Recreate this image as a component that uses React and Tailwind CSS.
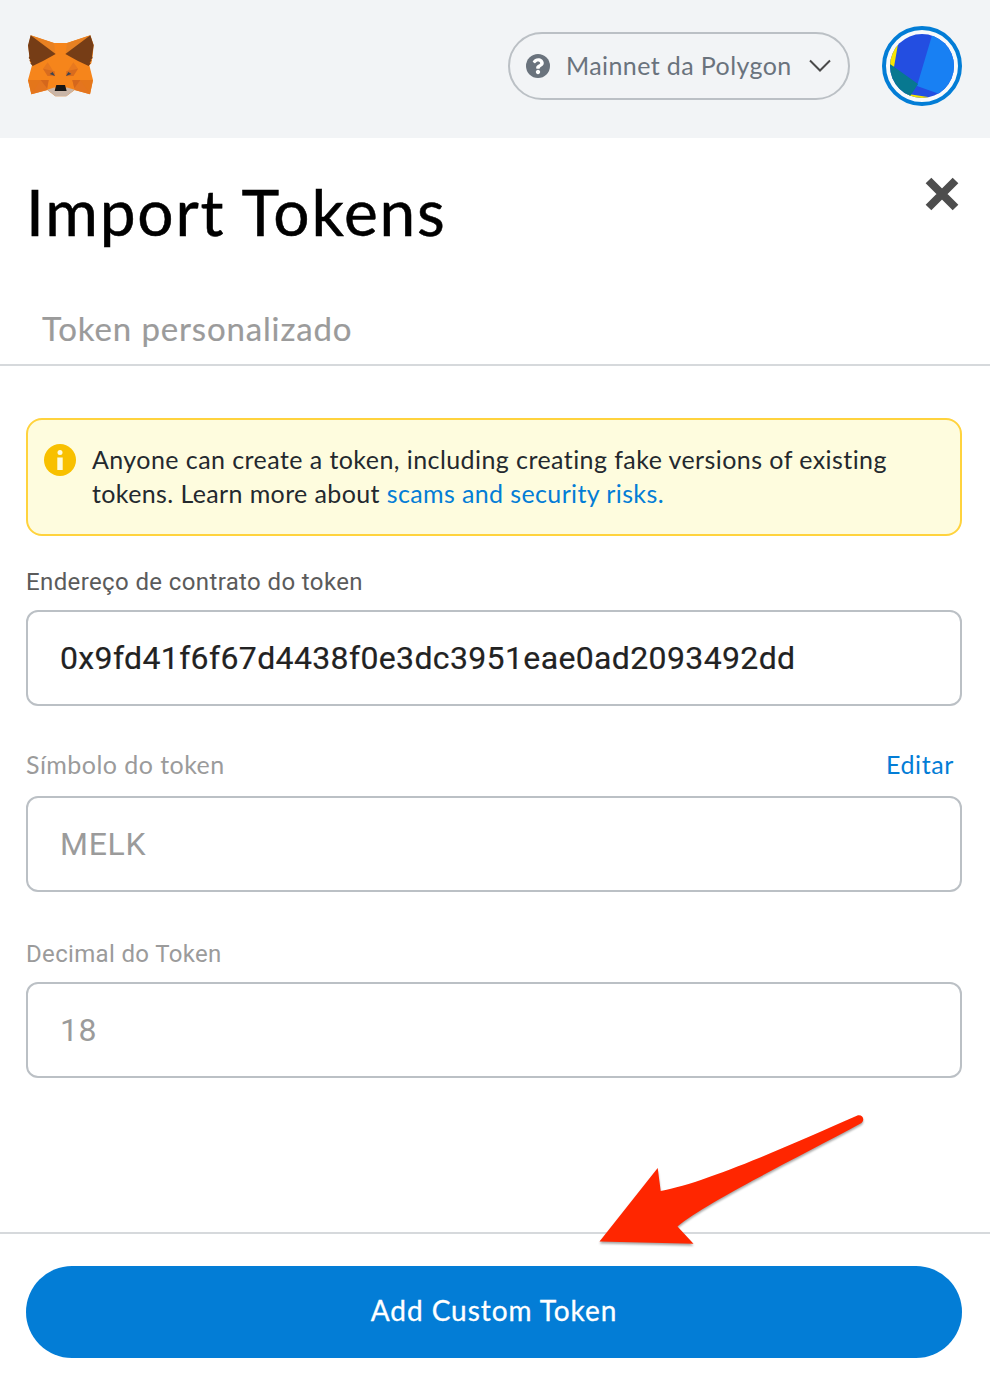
function Fox() {
  return (
    <svg className="h-[62px] w-[68px]" viewBox="36 30 204 186">
      <path d="M47 31L117 54H156L226 31L236 60L233 92L229 115L223 121L234 165L225 208L179 195L154 214H121L97 195L49 208L39 165L51 121L45 111L40 64Z" fill="#f6851b" />
      <path d="M47 31L117 54L121 87ZM226 31L156 54L152 87Z" fill="#e88122" />
      <path d="M47 31L122 87L84 108L53 123L46 115L49 112L43 107L46 104L41 99L43 94L39 61Z" fill="#763d16" />
      <path d="M226 31L151 87L189 108L221 123L227 115L224 112L230 107L227 104L233 99L231 94L236 61Z" fill="#763d16" />
      <path d="M39 165H84L49 208ZM234 165H189L225 208Z" fill="#e4761b" />
      <path d="M84 131L98 112L121 148L119 154L98 153ZM189 131L175 112L152 148L154 154L175 153Z" fill="#e8791f" />
      <path d="M84 131L119 139L120 153L98 153ZM189 131L154 139L153 153L175 153Z" fill="#d86c1e" />
      <path d="M77 165H101L97 195L49 208ZM196 165H172L179 195L225 208Z" fill="#e4751f" />
      <path d="M77 165H101L96 190ZM196 165H172L178 190Z" fill="#d5671c" />
      <path d="M97 194L120 187L123 198H151L154 187L179 194L154 214H121Z" fill="#c9b5a7" />
      <path d="M124 180H150L155 198H119Z" fill="#161616" />
      <path d="M104 147L113 141L120 153ZM169 147L160 141L153 153Z" fill="#3b4553" />
    </svg>
  );
}

function Avatar() {
  return (
    <svg className="size-20" viewBox="0 0 80 80">
      <defs>
        <clipPath id="disc"><circle cx="40" cy="40" r="32" /></clipPath>
      </defs>
      <circle cx="40" cy="40" r="38" fill="#f8fafb" stroke="#037dd6" strokeWidth="4" />
      <g clipPath="url(#disc)">
        <path d="M0 0H80V80H0Z" fill="#234ee1" />
        <path d="M51 6L35 60L80 76V0Z" fill="#1880f3" />
        <path d="M6 12L16 18L12 41L6 38ZM26 68L46 71V78H20Z" fill="#f7e600" />
        <path d="M4 35L36 58L27 72L4 72Z" fill="#077890" />
      </g>
    </svg>
  );
}

function Field({ label, value, action, className, labelClass, valueClass }) {
  return (
    <div className={className}>
      <div className="flex h-8 items-center justify-between pr-2">
        <label className={labelClass}>{label}</label>
        {action}
      </div>
      <div className="mt-3 flex h-24 items-center rounded-xl border-2 border-[#bbc0c5] px-8">
        <span className={valueClass}>{value}</span>
      </div>
    </div>
  );
}

export default function App() {
  return (
    <div className="relative flex h-[1388px] w-[990px] flex-col overflow-hidden bg-white font-['Lato',sans-serif]">
      <header className="flex h-[138px] shrink-0 items-start justify-between bg-[#f2f4f6] pr-7 pl-[27px]">
        <div className="mt-[35px]"><Fox /></div>
        <div className="flex">
          <button className="mt-8 mr-8 flex h-[68px] w-[342px] items-center rounded-full border-2 border-[#bbc0c5] pr-4 pl-4 text-[#6a737d]">
            <svg className="size-6 shrink-0" viewBox="0 0 512 512" fill="currentColor">
              <circle cx="256" cy="256" r="256" />
              <path d="M262.700 90c-54.500 0-89.300 23-116.500 63.800-3.500 5.300-2.400 12.400 2.700 16.300l34.700 26.300c5.200 3.900 12.600 3 16.700-2.100 17.900-22.700 30.100-35.800 57.300-35.800 20.400 0 45.700 13.100 45.700 33 0 15-12.400 22.700-32.500 34C247.100 238.500 216 254.900 216 296v4c0 6.600 5.400 12 12 12h56c6.600 0 12-5.400 12-12v-1.300c0-28.500 83.200-29.600 83.200-106.700 0-58-60.200-102-116.500-102zM256 338c-25.400 0-46 20.600-46 46s20.600 46 46 46 46-20.600 46-46-20.600-46-46-46z" fill="#ffffff" />
            </svg>
            <span className="mb-0.5 ml-4 grow whitespace-nowrap text-left text-[25px] leading-8 tracking-[0.4px]">Mainnet da Polygon</span>
            <svg className="h-4 w-6 shrink-0" viewBox="0 0 24 16" fill="none" stroke="#4a4a4a" strokeWidth="2">
              <path d="M2 2.500L12 12.500L22 2.500" />
            </svg>
          </button>
          <div className="mt-[26px]"><Avatar /></div>
        </div>
      </header>

      <div className="flex h-[146px] shrink-0 justify-between pr-[31px] pl-[26px]">
        <h1 className="mt-9 text-[64px] leading-[76px] tracking-[1.8px] text-black [-webkit-text-stroke:0.5px_black]">Import Tokens</h1>
        <svg className="mt-[39px] h-[34px] w-[34px]" viewBox="0 0 34 34" stroke="#4d4d4d" strokeWidth="8">
          <path d="M3.500 3.500L30.500 30.500M30.500 3.500L3.500 30.500" />
        </svg>
      </div>

      <div className="flex h-[82px] shrink-0 items-start border-b-2 border-[#d6d9dc] pl-[42px]">
        <span className="mt-6 text-[33px] leading-10 tracking-[0.85px] text-[#9b9b9b] [-webkit-text-stroke:0.2px_currentColor]">Token personalizado</span>
      </div>

      <main className="flex h-[866px] shrink-0 flex-col pt-[52px] pr-7 pl-[26px]">
        <div className="flex h-[118px] rounded-2xl border-2 border-[#ffd33d] bg-[#fefcde] pt-[23px] pl-4">
          <svg className="mt-px size-8 shrink-0" viewBox="0 0 32 32">
            <circle cx="16" cy="16" r="16" fill="#f8c000" />
            <circle cx="16" cy="8.500" r="2.500" fill="#fefcde" />
            <path d="M13.300 13.500H18.700V26H13.300Z" fill="#fefcde" />
          </svg>
          <p className="-mt-px ml-4 text-[25px] leading-[34px] tracking-[0.43px] whitespace-nowrap text-[#24292e]">
            <span className="block">Anyone can create a token, including creating fake versions of existing</span>
            <span className="block tracking-[0.38px]">tokens. Learn more about <a className="text-[#037dd6]">scams and security risks.</a></span>
          </p>
        </div>
        <Field
          className="mt-[30px]"
          label="Endereço de contrato do token"
          value="0x9fd41f6f67d4438f0e3dc3951eae0ad2093492dd"
          labelClass="font-['Roboto',sans-serif] text-[24px] tracking-[0.38px] text-[#5b5b5b]"
          valueClass="font-['Roboto',sans-serif] text-[32px] tracking-[0.36px] text-[#222222] [-webkit-text-stroke:0.2px_currentColor]"
        />
        <Field
          className="mt-[46px]"
          label="Símbolo do token"
          value="MELK"
          action={<a className="mb-1.5 text-[25px] tracking-[0.6px] text-[#037dd6]">Editar</a>}
          labelClass="mb-1.5 text-[25px] tracking-[0.45px] text-[#9b9b9b]"
          valueClass="font-['Roboto',sans-serif] text-[32px] tracking-[0.7px] text-[#9b9b9b]"
        />
        <Field
          className="mt-[46px]"
          label="Decimal do Token"
          value="18"
          labelClass="font-['Roboto',sans-serif] text-[24px] tracking-[0.34px] text-[#9b9b9b]"
          valueClass="font-['Roboto',sans-serif] text-[32px] tracking-[0.5px] text-[#9b9b9b]"
        />
      </main>

      <footer className="flex grow flex-col border-t-2 border-[#d6d9dc] pt-8 pr-7 pl-[26px]">
        <button className="flex h-[92px] items-center justify-center rounded-full bg-[#037dd6] pb-1 text-[28px] tracking-[0.95px] text-white [-webkit-text-stroke:0.3px_white]">
          <span>Add Custom Token</span>
        </button>
      </footer>

      <svg className="absolute top-[1100px] left-[590px] h-40 w-[290px] drop-shadow-[0_2px_1px_rgba(0,0,0,0.35)]" viewBox="0 0 290 160">
        <path d="M9.500 141.500L67.700 68L70.700 91C116 83 205 43 268 15.300C273 14.500 275 20 271.500 23C205 59 115 103 87.500 126.500L103.500 143.800Z" fill="#ff2600" />
      </svg>
    </div>
  );
}
